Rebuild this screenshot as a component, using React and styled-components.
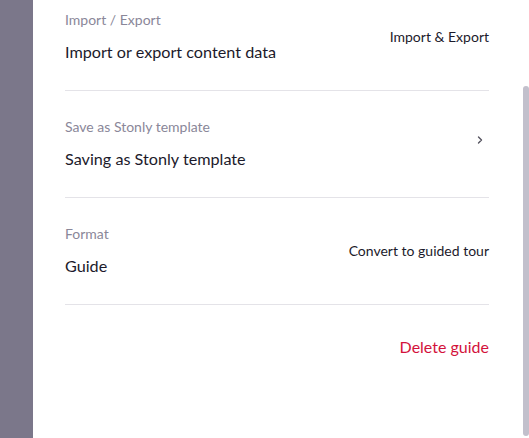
import React from 'react';
import styled, { createGlobalStyle } from 'styled-components';

const GlobalStyle = createGlobalStyle`
  html, body {
    margin: 0;
    padding: 0;
    background: #ffffff;
  }
  body {
    font-family: 'Lato', 'Liberation Sans', sans-serif;
    -webkit-font-smoothing: antialiased;
  }
`;

const Layout = styled.div`
  display: flex;
  height: 438px;
  overflow: hidden;
`;

const Backdrop = styled.div`
  flex: 0 0 33px;
  background: #7b778a;
`;

const Panel = styled.div`
  position: relative;
  flex: 1;
  background: #ffffff;
  padding: 0 40px 0 32px;
  overflow: hidden;
`;

const ScrollThumb = styled.div`
  position: absolute;
  top: 86px;
  right: 0;
  width: 6px;
  height: 350px;
  border-radius: 4px;
  background: #c2c0cc;
`;

const List = styled.div`
  margin-top: -16px;
`;

const Row = styled.div`
  display: flex;
  align-items: center;
  justify-content: space-between;
  padding: 26px 0;
  border-bottom: 1px solid #e4e3e8;
`;

const Info = styled.div`
  display: flex;
  flex-direction: column;
  gap: 10px;
`;

const Label = styled.span`
  font-size: 14px;
  line-height: 20px;
  color: #8a8799;
`;

const Value = styled.span`
  font-size: 16.2px;
  line-height: 24px;
  color: #1c1a2b;
`;

const Action = styled.button`
  border: none;
  background: none;
  padding: 0;
  font-family: inherit;
  font-size: 14px;
  line-height: 20px;
  color: #1c1a2b;
  cursor: pointer;
  display: flex;
  align-items: center;
`;

const ChevronIcon = styled.svg`
  display: block;
  margin: 0 6px 8px 0;
`;

const Footer = styled.div`
  display: flex;
  justify-content: flex-end;
  padding-top: 30px;
`;

const DangerButton = styled.button`
  border: none;
  background: none;
  padding: 0;
  font-family: inherit;
  font-size: 16px;
  line-height: 24px;
  color: #d3123b;
  cursor: pointer;
`;

const Chevron = () => (
  <ChevronIcon width="6" height="8" viewBox="0 0 6 8" fill="none">
    <path d="M1.5 1L4.5 4L1.5 7" stroke="#55535f" strokeWidth="1.4" strokeLinecap="round" strokeLinejoin="round" />
  </ChevronIcon>
);

const settings = [
  { label: 'Import / Export', value: 'Import or export content data', action: 'Import & Export' },
  { label: 'Save as Stonly template', value: 'Saving as Stonly template', chevron: true },
  { label: 'Format', value: 'Guide', action: 'Convert to guided tour' },
];

export default function App() {
  return (
    <>
      <GlobalStyle />
      <Layout>
        <Backdrop />
        <Panel>
          <List>
            {settings.map((s) => (
              <Row key={s.label}>
                <Info>
                  <Label>{s.label}</Label>
                  <Value>{s.value}</Value>
                </Info>
                <Action>{s.chevron ? <Chevron /> : s.action}</Action>
              </Row>
            ))}
          </List>
          <Footer>
            <DangerButton>Delete guide</DangerButton>
          </Footer>
          <ScrollThumb />
        </Panel>
      </Layout>
    </>
  );
}
